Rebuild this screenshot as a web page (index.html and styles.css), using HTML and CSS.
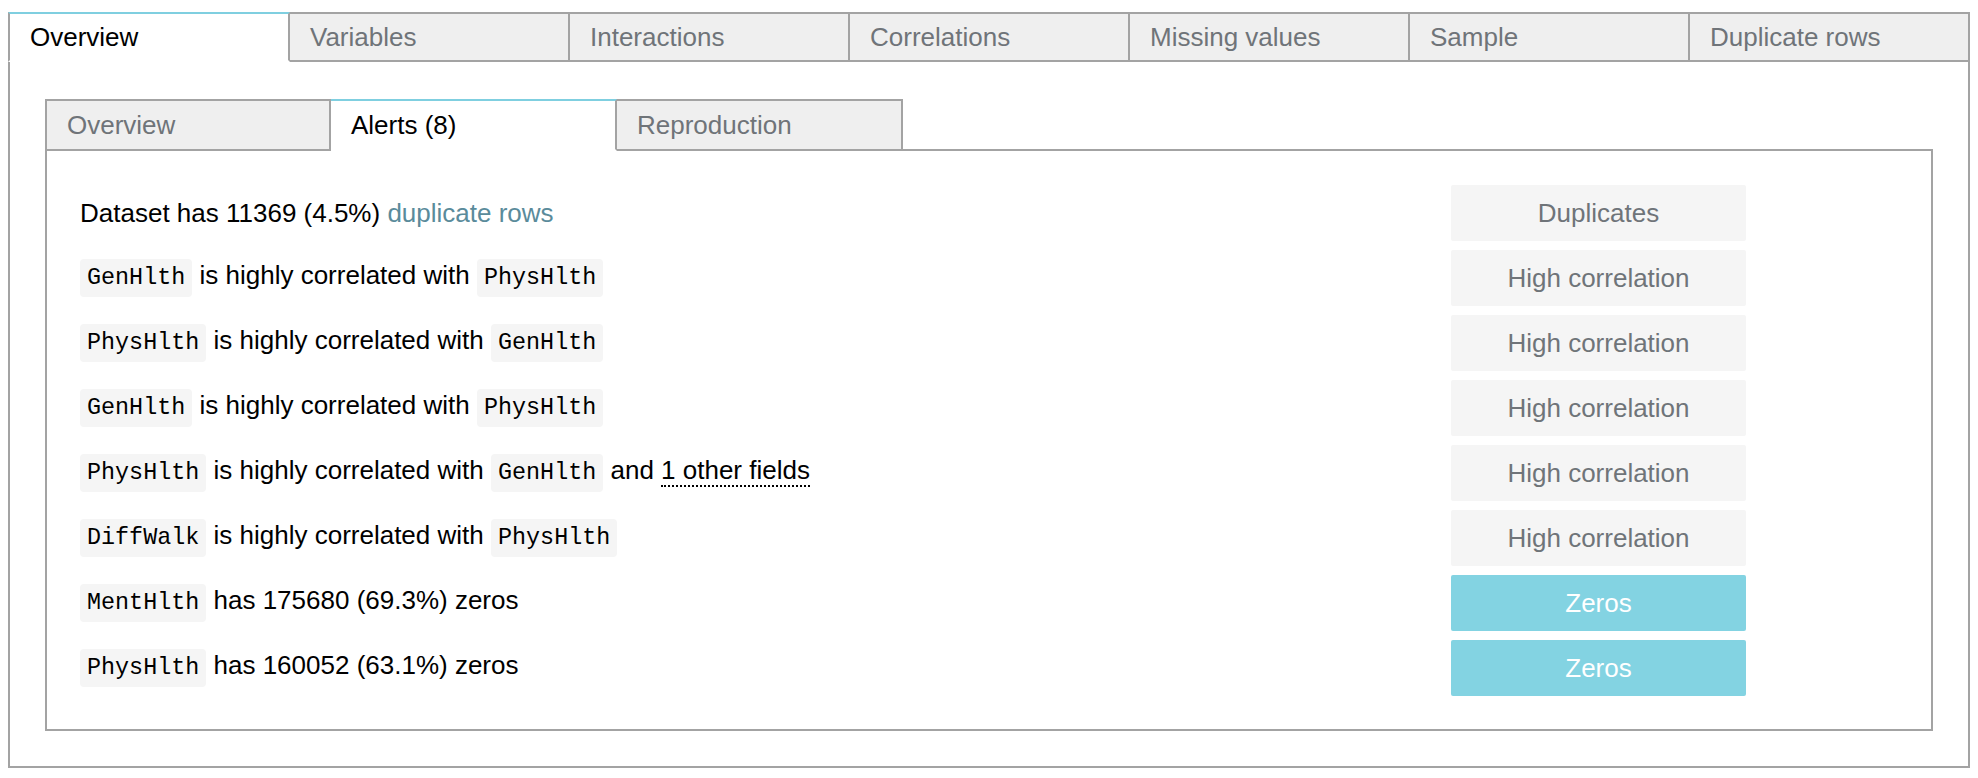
FILE: index.html
```html
<!DOCTYPE html>
<html lang="en">
<head>
<meta charset="utf-8">
<title>Alerts</title>
<link rel="stylesheet" href="styles.css">
</head>
<body>
<div class="report">
  <ul class="tabs outer-tabs">
    <li class="tab active">Overview</li>
    <li class="tab">Variables</li>
    <li class="tab">Interactions</li>
    <li class="tab">Correlations</li>
    <li class="tab">Missing values</li>
    <li class="tab">Sample</li>
    <li class="tab">Duplicate rows</li>
  </ul>
  <div class="panel">
    <ul class="tabs inner-tabs">
      <li class="tab">Overview</li>
      <li class="tab active">Alerts (8)</li>
      <li class="tab">Reproduction</li>
    </ul>
    <div class="alerts">
      <div class="alert-text">Dataset has 11369 (4.5%) <a class="link">duplicate rows</a></div>
      <span class="badge">Duplicates</span>

      <div class="alert-text"><code>GenHlth</code> is highly correlated with <code>PhysHlth</code></div>
      <span class="badge">High correlation</span>

      <div class="alert-text"><code>PhysHlth</code> is highly correlated with <code>GenHlth</code></div>
      <span class="badge">High correlation</span>

      <div class="alert-text"><code>GenHlth</code> is highly correlated with <code>PhysHlth</code></div>
      <span class="badge">High correlation</span>

      <div class="alert-text"><code>PhysHlth</code> is highly correlated with <code>GenHlth</code> and <abbr class="more">1 other fields</abbr></div>
      <span class="badge">High correlation</span>

      <div class="alert-text"><code>DiffWalk</code> is highly correlated with <code>PhysHlth</code></div>
      <span class="badge">High correlation</span>

      <div class="alert-text"><code>MentHlth</code> has 175680 (69.3%) zeros</div>
      <span class="badge badge-info">Zeros</span>

      <div class="alert-text"><code>PhysHlth</code> has 160052 (63.1%) zeros</div>
      <span class="badge badge-info">Zeros</span>
    </div>
  </div>
</div>
</body>
</html>
```

FILE: styles.css
```css
html, body {
  background: #ffffff;
}

body {
  margin: 8px;
  font-family: "Liberation Sans", Arial, Helvetica, sans-serif;
  font-size: 26px;
  color: #000000;
}

.report {
  padding-top: 4px;
}

.tabs {
  display: flex;
  list-style: none;
  margin: 0;
  padding: 0;
}

.tab {
  box-sizing: border-box;
  display: flex;
  align-items: center;
  padding: 0 20px;
  background: #efefef;
  color: #6f7479;
  border-top: 2px solid #a3a3a3;
  border-right: 2px solid #a3a3a3;
  border-bottom: 2px solid #a3a3a3;
  white-space: nowrap;
}

.tab:first-child {
  border-left: 2px solid #a3a3a3;
}

.tab.active {
  background: #ffffff;
  color: #000000;
  border-top-color: #7fcfe0;
  border-bottom-color: #ffffff;
}

.outer-tabs {
  margin-bottom: -2px;
}

.outer-tabs .tab {
  flex: 1 1 0;
  height: 50px;
}

.panel {
  border: 2px solid #a3a3a3;
  padding: 37px 35px 35px 35px;
}

.inner-tabs {
  margin-bottom: -2px;
}

.inner-tabs .tab {
  flex: 0 0 286px;
  height: 52px;
}

.alerts {
  border: 2px solid #a3a3a3;
  padding: 34px 185px 33px 33px;
  display: grid;
  grid-template-columns: 1fr 295px;
  grid-auto-rows: 56px;
  row-gap: 9px;
  align-items: center;
}

.alert-text {
  white-space: nowrap;
}

.link {
  color: #5a8b9b;
  text-decoration: none;
}

.more {
  text-decoration: none;
  border-bottom: 2px dotted #000000;
}

code {
  display: inline-block;
  font-family: "Liberation Mono", "DejaVu Sans Mono", monospace;
  font-size: 23.4px;
  line-height: 38px;
  padding: 0 7px;
  background: #f5f5f5;
  color: #000000;
  border-radius: 4px;
}

.badge {
  height: 56px;
  display: flex;
  align-items: center;
  justify-content: center;
  background: #f5f5f5;
  color: #6f7479;
  border-radius: 2px;
}

.badge-info {
  background: #83d3e2;
  color: #ffffff;
}
```
